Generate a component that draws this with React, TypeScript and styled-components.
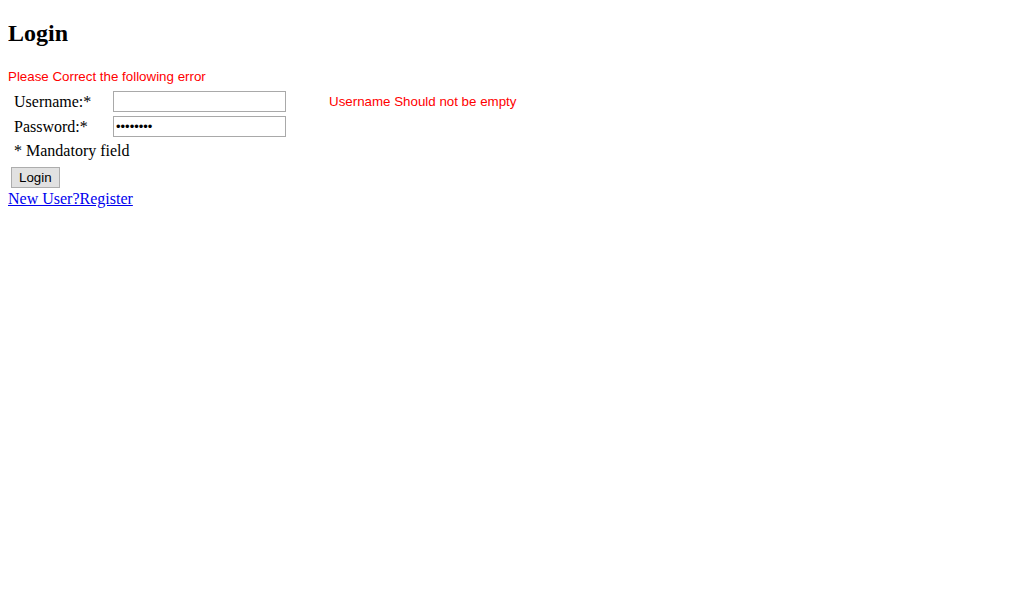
import React from "react";
import styled, { createGlobalStyle } from "styled-components";

const Global = createGlobalStyle`
  html, body { margin: 0; padding: 0; }
  body {
    margin: 8px;
    font-family: "Liberation Serif", "Times New Roman", serif;
    font-size: 16px;
    color: #000;
    background: #fff;
  }
`;

const Title = styled.h2`
  font-size: 24px;
  font-weight: bold;
  margin: 11px 0 22px;
  line-height: 28px;
`;

const ErrorHead = styled.div`
  font-family: "Liberation Sans", Arial, sans-serif;
  font-size: 13.33px;
  color: #ff0000;
  line-height: 16px;
  margin-bottom: 3px;
`;

const Form = styled.form`
  margin: 0;
`;

const Table = styled.table`
  border-collapse: separate;
  border-spacing: 2px;
  margin-left: 0;
`;

const Row = styled.tr<{ $tight?: boolean }>`
  & > td {
    padding-bottom: ${(p) => (p.$tight ? "1px" : "2px")};
  }
`;

const LabelCell = styled.td`
  padding: 1px 4px 2px;
  width: 92px;
  white-space: nowrap;
`;

const InputCell = styled.td`
  padding: 1px 1px 2px;
  width: 194px;
`;

const MsgCell = styled.td`
  padding: 1px 1px 2px 19px;
  font-family: "Liberation Sans", Arial, sans-serif;
  font-size: 13.33px;
  color: #ff0000;
  white-space: nowrap;
`;

const Field = styled.input`
  width: 173px;
  height: 21px;
  box-sizing: border-box;
  border: 1px solid #a9a9a9;
  padding: 1px 2px;
  font-size: 13px;
  font-family: "Liberation Sans", Arial, sans-serif;
  margin: 0;
`;

const NoteCell = styled.td`
  padding: 1px 4px 2px;
`;

const Button = styled.button`
  font-family: "Liberation Sans", Arial, sans-serif;
  font-size: 13.33px;
  padding: 1px 7px;
  height: 21px;
  border: 1px solid #adadad;
  background: #e1e1e1;
  color: #000;
  margin: 0 0 0 3px;
`;

const ButtonRow = styled.div`
  margin-top: 3px;
`;

const RegisterLink = styled.a`
  color: #0000ee;
  text-decoration: underline;
  display: inline-block;
  line-height: 20px;
  margin-top: 1px;
`;

export default function App() {
  return (
    <>
      <Global />
      <Title>Login</Title>
      <ErrorHead>Please Correct the following error</ErrorHead>
      <Form onSubmit={(e) => e.preventDefault()}>
        <Table>
          <tbody>
            <Row $tight>
              <LabelCell>Username:*</LabelCell>
              <InputCell>
                <Field type="text" />
              </InputCell>
              <MsgCell>Username Should not be empty</MsgCell>
            </Row>
            <Row>
              <LabelCell>Password:*</LabelCell>
              <InputCell>
                <Field type="password" defaultValue="password" />
              </InputCell>
              <MsgCell></MsgCell>
            </Row>
            <Row>
              <NoteCell colSpan={3}>* Mandatory field</NoteCell>
            </Row>
          </tbody>
        </Table>
        <ButtonRow>
          <Button type="submit">Login</Button>
        </ButtonRow>
      </Form>
      <RegisterLink href="#">New User?Register</RegisterLink>
    </>
  );
}
